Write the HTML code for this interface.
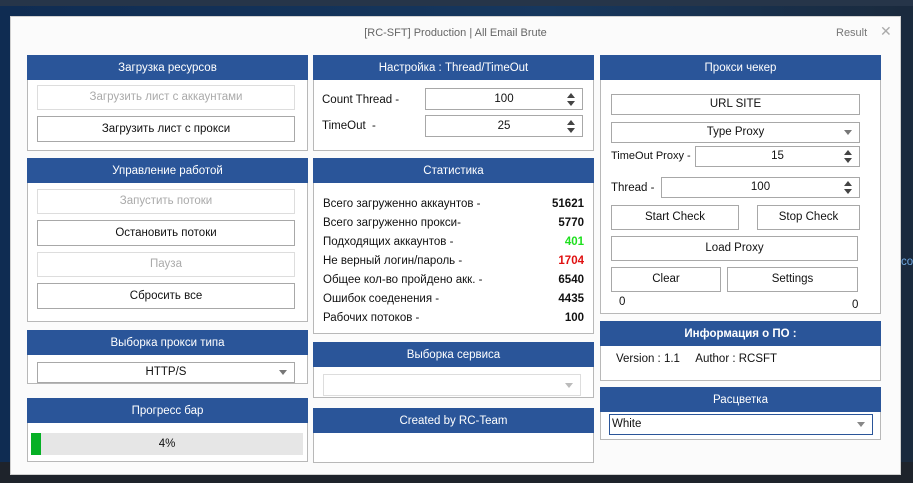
<!DOCTYPE html><html><head><meta charset="utf-8"><style>
*{box-sizing:border-box;margin:0;padding:0}
body{width:913px;height:483px;overflow:hidden;background:linear-gradient(90deg,#0f2c52,#16375e 60%,#1a2a3d);font-family:"Liberation Sans","DejaVu Sans",sans-serif;font-size:11.5px;color:#111;position:relative}
.a{position:absolute}
.win{left:10px;top:16px;width:891px;height:459px;background:#fbfbfb;border:1px solid #d0d0d0}
.pn{position:absolute;background:#fff;border:1px solid #b8b8b8}
.hd{position:absolute;left:-1px;right:-1px;top:-1px;height:25px;background:#2a5599;color:#fff;text-align:center;line-height:26px;font-size:11.5px}
.bt{position:absolute;border:1px solid #a8a8a8;background:#fff;text-align:center}
.dis{color:#aaa;border-color:#ddd}
.sp{position:absolute;border:1px solid #a8a8a8;background:#fff;text-align:center}
.ar{position:absolute;right:7px;width:0;height:0;border-left:4px solid transparent;border-right:4px solid transparent}
.up{border-bottom:5px solid #444}.dn{border-top:5px solid #444}
.dd{border-top:5px solid #777}
.row{position:absolute;left:9px;right:9px;height:20px;line-height:20px}
.row b{float:right}
</style></head><body>
<div class="a" style="left:0;top:0;width:913px;height:6px;background:#263549"></div>
<div class="a" style="left:0;top:462px;width:913px;height:21px;background:#1e232b"></div>
<div class="a" style="left:901px;top:256px;color:#6fa7e0">co</div>
<div class="a win">
<div class="a" style="left:0;right:0;top:10px;text-align:center;color:#666;font-size:11px">[RC-SFT] Production | All Email Brute</div>
<div class="a" style="left:825px;top:10px;color:#777;font-size:11px">Result</div>
<div class="a" style="left:869px;top:6px;color:#aaa;font-size:14px;font-weight:bold">✕</div>
</div>
<!-- left -->
<div class="pn" style="left:27px;top:55px;width:281px;height:96px"><div class="hd">Загрузка ресурсов</div>
<div class="bt dis" style="left:9px;top:29px;width:258px;height:25px;line-height:23px">Загрузить лист с аккаунтами</div>
<div class="bt" style="left:9px;top:60px;width:258px;height:26px;line-height:24px">Загрузить лист с прокси</div></div>
<div class="pn" style="left:27px;top:158px;width:281px;height:164px"><div class="hd">Управление работой</div>
<div class="bt dis" style="left:9px;top:30px;width:258px;height:25px;line-height:23px">Запустить потоки</div>
<div class="bt" style="left:9px;top:61px;width:258px;height:26px;line-height:24px">Остановить потоки</div>
<div class="bt dis" style="left:9px;top:93px;width:258px;height:25px;line-height:23px">Пауза</div>
<div class="bt" style="left:9px;top:124px;width:258px;height:26px;line-height:24px">Сбросить все</div></div>
<div class="pn" style="left:27px;top:330px;width:281px;height:54px"><div class="hd">Выборка прокси типа</div>
<div class="bt" style="left:9px;top:31px;width:258px;height:21px;line-height:19px">HTTP/S<div class="ar dd" style="top:7px"></div></div></div>
<div class="pn" style="left:27px;top:398px;width:281px;height:64px"><div class="hd">Прогресс бар</div>
<div class="a" style="left:3px;top:34px;width:272px;height:22px;background:#e6e6e6;text-align:center;line-height:22px">4%</div>
<div class="a" style="left:3px;top:34px;width:10px;height:22px;background:#06b025"></div></div>
<!-- middle -->
<div class="pn" style="left:313px;top:55px;width:281px;height:96px"><div class="hd">Настройка : Thread/TimeOut</div>
<div class="a" style="left:8px;top:38px">Count Thread -</div>
<div class="sp" style="left:111px;top:32px;width:158px;height:22px;line-height:20px">100<div class="ar up" style="top:4px"></div><div class="ar dn" style="top:12px"></div></div>
<div class="a" style="left:8px;top:64px">TimeOut&nbsp; -</div>
<div class="sp" style="left:111px;top:59px;width:158px;height:22px;line-height:20px">25<div class="ar up" style="top:4px"></div><div class="ar dn" style="top:12px"></div></div></div>
<div class="pn" style="left:313px;top:158px;width:281px;height:176px"><div class="hd">Статистика</div>
<div class="row" style="top:35px">Всего загруженно аккаунтов -<b>51621</b></div>
<div class="row" style="top:54px">Всего загруженно прокси-<b>5770</b></div>
<div class="row" style="top:73px">Подходящих аккаунтов -<b style="color:#1ee01e">401</b></div>
<div class="row" style="top:92px">Не верный логин/пароль -<b style="color:#e01010">1704</b></div>
<div class="row" style="top:111px">Общее кол-во пройдено акк. -<b>6540</b></div>
<div class="row" style="top:130px">Ошибок соеденения -<b>4435</b></div>
<div class="row" style="top:149px">Рабочих потоков -<b>100</b></div></div>
<div class="pn" style="left:313px;top:342px;width:281px;height:56px"><div class="hd">Выборка сервиса</div>
<div class="bt dis" style="left:9px;top:31px;width:258px;height:22px"><div class="ar" style="top:8px;border-top:5px solid #bbb"></div></div></div>
<div class="pn" style="left:313px;top:408px;width:281px;height:55px"><div class="hd">Created by RC-Team</div></div>
<!-- right -->
<div class="pn" style="left:600px;top:55px;width:281px;height:259px"><div class="hd">Прокси чекер</div>
<div class="bt" style="left:10px;top:38px;width:249px;height:21px;line-height:19px">URL SITE</div>
<div class="bt" style="left:10px;top:66px;width:249px;height:21px;line-height:19px">Type Proxy<div class="ar dd" style="top:7px"></div></div>
<div class="a" style="left:10px;top:94px;font-size:11px;white-space:nowrap">TimeOut Proxy -</div>
<div class="sp" style="left:94px;top:90px;width:165px;height:21px;line-height:19px">15<div class="ar up" style="top:3px"></div><div class="ar dn" style="top:11px"></div></div>
<div class="a" style="left:10px;top:126px">Thread -</div>
<div class="sp" style="left:60px;top:121px;width:199px;height:21px;line-height:19px">100<div class="ar up" style="top:3px"></div><div class="ar dn" style="top:11px"></div></div>
<div class="bt" style="left:10px;top:149px;width:128px;height:25px;line-height:23px">Start Check</div>
<div class="bt" style="left:156px;top:149px;width:103px;height:25px;line-height:23px">Stop Check</div>
<div class="bt" style="left:10px;top:180px;width:247px;height:25px;line-height:23px">Load Proxy</div>
<div class="bt" style="left:10px;top:211px;width:110px;height:25px;line-height:23px">Clear</div>
<div class="bt" style="left:126px;top:211px;width:131px;height:25px;line-height:23px">Settings</div>
<div class="a" style="left:18px;top:240px">0</div><div class="a" style="left:251px;top:243px">0</div></div>
<div class="pn" style="left:600px;top:321px;width:281px;height:60px"><div class="hd" style="font-weight:bold">Информация о ПО :</div>
<div class="a" style="left:15px;top:31px">Version : 1.1&nbsp;&nbsp;&nbsp;&nbsp; Author : RCSFT</div></div>
<div class="pn" style="left:600px;top:387px;width:281px;height:53px"><div class="hd">Расцветка</div>
<div class="a" style="left:8px;top:26px;width:264px;height:21px;border:1px solid #2a5599;background:#fff;line-height:19px;padding-left:2px">White<div class="ar dd" style="top:7px;border-top-color:#888"></div></div></div>
</body></html>
